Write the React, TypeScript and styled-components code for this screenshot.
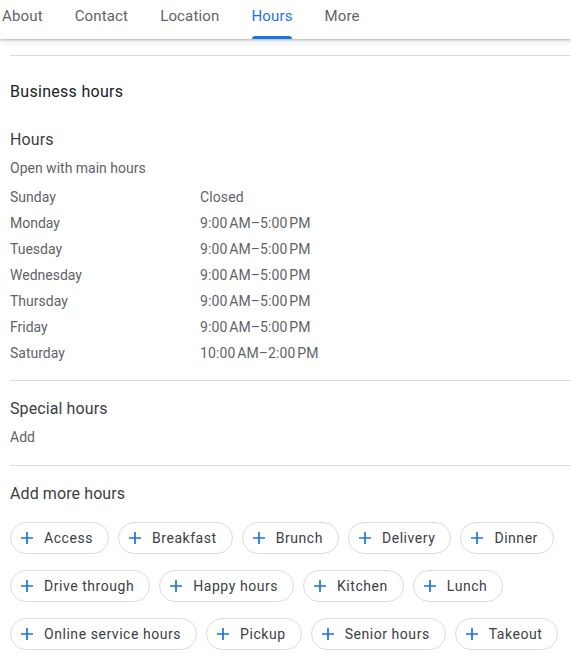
import React from 'react';
import styled, { createGlobalStyle } from 'styled-components';

const GlobalStyle = createGlobalStyle`
  html, body {
    margin: 0;
    padding: 0;
    background: #ffffff;
  }
  body {
    font-family: Roboto, "Liberation Sans", Arial, sans-serif;
    -webkit-font-smoothing: antialiased;
  }
`;

const Page = styled.div`
  width: 571px;
  overflow: hidden;
`;

// Tab bar
const TabBar = styled.nav`
  height: 39px;
  display: flex;
  align-items: stretch;
  gap: 32px;
  padding-left: 2px;
  background: #ffffff;
  box-shadow: 0 1px 2px rgba(60, 64, 67, 0.3), 0 2px 6px 1px rgba(60, 64, 67, 0.12);
  position: relative;
  z-index: 1;
`;

const Tab = styled.div<{ $active?: boolean }>`
  position: relative;
  display: flex;
  align-items: flex-start;
  padding-top: 7px;
  font-size: 15px;
  line-height: 18px;
  letter-spacing: 0.15px;
  color: ${p => (p.$active ? '#1a73e8' : '#5f6368')};
  white-space: nowrap;

  &::after {
    content: '';
    display: ${p => (p.$active ? 'block' : 'none')};
    position: absolute;
    left: 1px;
    right: 1px;
    bottom: 0;
    height: 3px;
    border-radius: 3px 3px 0 0;
    background: #1a73e8;
  }
`;

// Content
const Content = styled.main`
  padding-left: 10px;
  padding-bottom: 8px;
`;

const Divider = styled.hr<{ $top: number; $bottom: number }>`
  border: 0;
  height: 1px;
  background: #dadce0;
  margin: ${p => p.$top}px 0 ${p => p.$bottom}px;
`;

const PageTitle = styled.h2`
  margin: 0 0 24px;
  font-size: 16px;
  line-height: 24px;
  font-weight: 400;
  letter-spacing: 0.3px;
  color: #202124;
`;

const SectionTitle = styled.h3<{ $gap: number }>`
  margin: 0 0 ${p => p.$gap}px;
  font-size: 16px;
  line-height: 24px;
  font-weight: 400;
  letter-spacing: 0.1px;
  color: #3c4043;
`;

const Note = styled.div`
  font-size: 14px;
  line-height: 20px;
  color: #5f6368;
`;

const HoursTable = styled.div`
  margin-top: 6px;
  display: grid;
  grid-template-columns: 190px auto;
  grid-auto-rows: 26px;
  align-items: center;
  font-size: 14px;
  color: #5f6368;
`;

const Time = styled.span`
  color: #5f6368;
  letter-spacing: 0.1px;
`;

const Chips = styled.div`
  display: flex;
  flex-wrap: wrap;
  column-gap: 9px;
  row-gap: 16px;
  margin-top: 16px;
`;

const Chip = styled.button`
  height: 32px;
  display: inline-flex;
  align-items: center;
  gap: 10px;
  padding: 0 15px 0 9px;
  border: 1px solid #dadce0;
  border-radius: 16px;
  background: #ffffff;
  font-family: Roboto, "Liberation Sans", Arial, sans-serif;
  font-size: 14px;
  font-weight: 400;
  letter-spacing: 0.55px;
  color: #3c4043;
  cursor: pointer;
`;

const PlusIcon = () => (
  <svg width="14" height="14" viewBox="0 0 14 14" aria-hidden="true">
    <path d="M7 1v12M1 7h12" stroke="#1a73e8" strokeWidth="1.7" fill="none" />
  </svg>
);

const tabs = ['About', 'Contact', 'Location', 'Hours', 'More'];

const hours: [string, string][] = [
  ['Sunday', 'Closed'],
  ['Monday', '9:00\u202fAM\u20135:00\u202fPM'],
  ['Tuesday', '9:00\u202fAM\u20135:00\u202fPM'],
  ['Wednesday', '9:00\u202fAM\u20135:00\u202fPM'],
  ['Thursday', '9:00\u202fAM\u20135:00\u202fPM'],
  ['Friday', '9:00\u202fAM\u20135:00\u202fPM'],
  ['Saturday', '10:00\u202fAM\u20132:00\u202fPM'],
];

const moreHours = [
  'Access', 'Breakfast', 'Brunch', 'Delivery', 'Dinner',
  'Drive through', 'Happy hours', 'Kitchen', 'Lunch',
  'Online service hours', 'Pickup', 'Senior hours', 'Takeout',
];

const App: React.FC = () => (
  <Page>
    <GlobalStyle />
    <TabBar>
      {tabs.map(t => (
        <Tab key={t} $active={t === 'Hours'}>{t}</Tab>
      ))}
    </TabBar>

    <Content>
      <Divider $top={16} $bottom={24} />
      <PageTitle>Business hours</PageTitle>

      <SectionTitle $gap={6}>Hours</SectionTitle>
      <Note>Open with main hours</Note>
      <HoursTable>
        {hours.map(([day, time]) => (
          <React.Fragment key={day}>
            <span>{day}</span>
            <Time>{time}</Time>
          </React.Fragment>
        ))}
      </HoursTable>

      <Divider $top={14} $bottom={16} />
      <SectionTitle $gap={6}>Special hours</SectionTitle>
      <Note>Add</Note>

      <Divider $top={18} $bottom={16} />
      <SectionTitle $gap={0}>Add more hours</SectionTitle>
      <Chips>
        {moreHours.map(h => (
          <Chip key={h}>
            <PlusIcon />
            {h}
          </Chip>
        ))}
      </Chips>
    </Content>
  </Page>
);

export default App;
